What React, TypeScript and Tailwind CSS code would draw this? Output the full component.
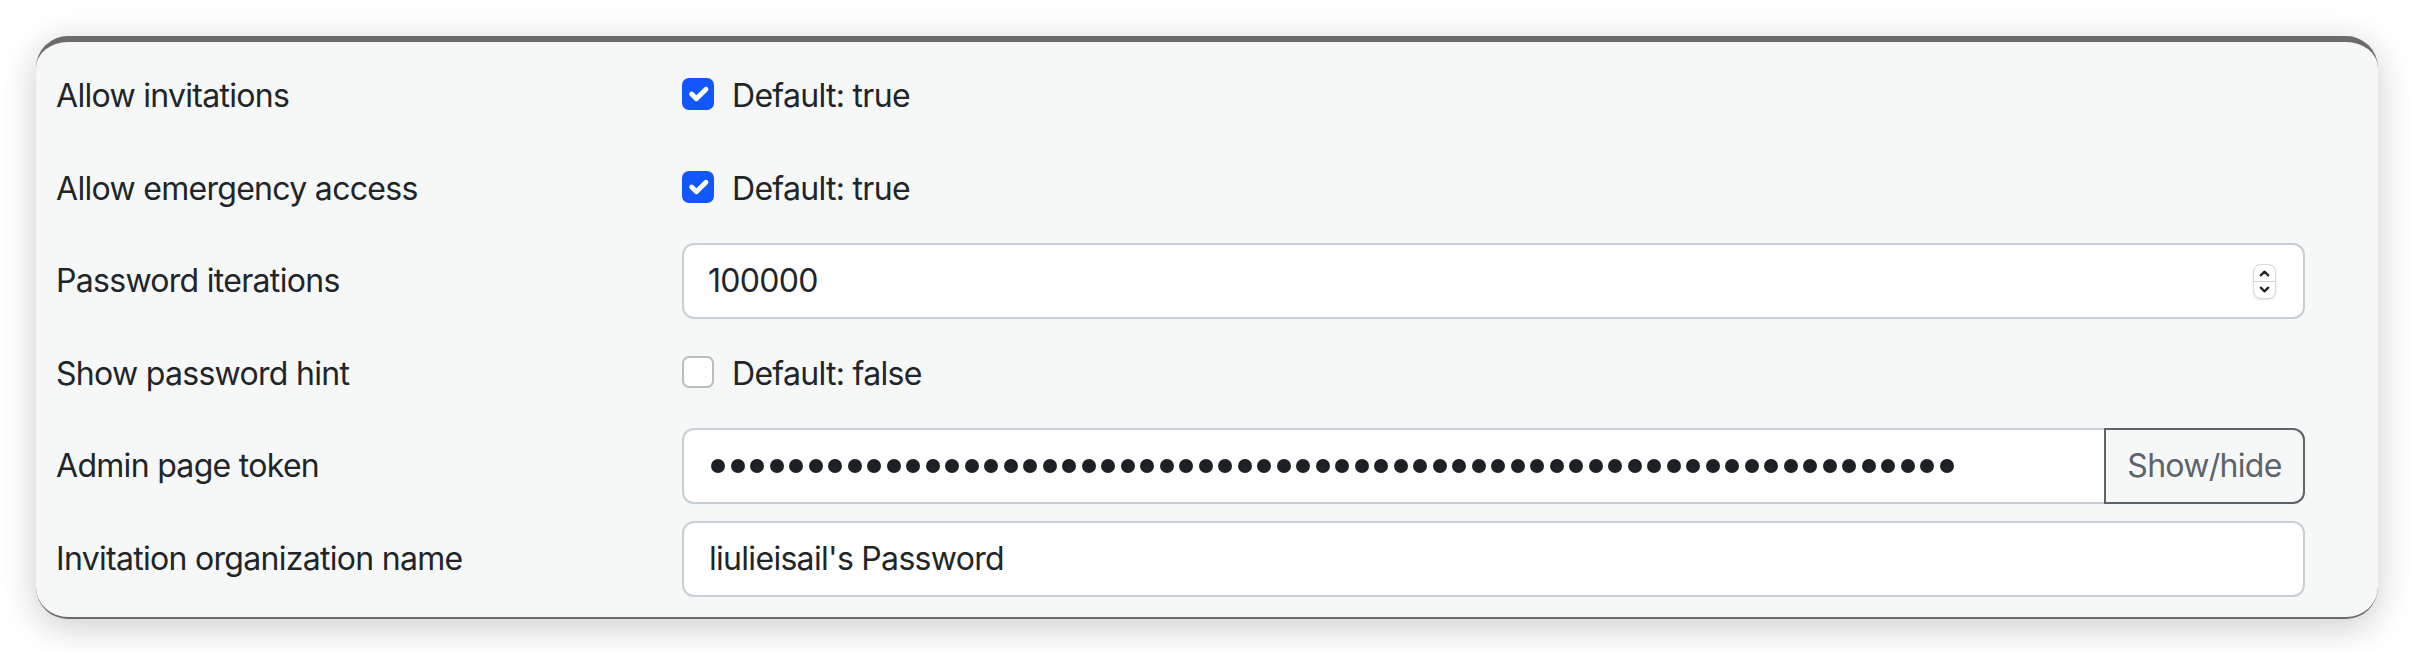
import React from 'react';
import { ChevronUp, ChevronDown } from 'lucide-react';

const Check: React.FC<{ on: boolean }> = ({ on }) => (
    <span
        className={
            on
                ? 'mt-[6px] flex h-[32px] w-[32px] shrink-0 items-center justify-center rounded-[7px] bg-[#1257fb]'
                : 'mt-[6px] flex h-[32px] w-[32px] shrink-0 items-center justify-center rounded-[7px] border-2 border-[#b9bdc1] bg-white'
        }
    >
        {on && (
            <svg viewBox="0 0 20 20" className="h-[32px] w-[32px]">
                <path d="m6 10 3 3 6-6" fill="none" stroke="#fff" strokeWidth="3" strokeLinecap="round" strokeLinejoin="round" />
            </svg>
        )}
    </span>
);

const Label: React.FC<{ children: React.ReactNode }> = ({ children }) => (
    <div className="w-[626px] shrink-0 pt-[14px] text-[32px] leading-[48px] text-[#212529]">{children}</div>
);

const CheckRow: React.FC<{ label: string; on: boolean }> = ({ label, on }) => (
    <div className="flex h-[76px]">
        <Label>{label}</Label>
        <div className="flex items-start gap-[18px] pt-[14px]">
            <Check on={on} />
            <span className="text-[32px] leading-[48px] text-[#212529]">Default: {on ? 'true' : 'false'}</span>
        </div>
    </div>
);

const App: React.FC = () => {
    const dots = Array.from({ length: 64 });

    return (
        <div className="min-h-[652px] bg-white px-[36px] pt-[36px] font-['Inter','Liberation_Sans',sans-serif] tracking-[-0.7px]">
            <div className="flex flex-col gap-[16.5px] rounded-[32px] border-t-[6px] border-b-[2px] border-[#6b6b6b] bg-[#f6f8f7] pt-[16px] pb-[20px] pl-[20px] shadow-[0_8px_36px_rgba(0,0,0,0.2)]">
                <CheckRow label="Allow invitations" on={true} />
                <CheckRow label="Allow emergency access" on={true} />

                {/* number input */}
                <div className="flex h-[76px]">
                    <Label>Password iterations</Label>
                    <div className="flex h-[76px] w-[1623px] items-center justify-between rounded-[12px] border-2 border-[#c9ced4] bg-white pl-[24px] pr-[27px]">
                        <span className="text-[32px] leading-[48px] text-[#212529]">100000</span>
                        <span className="flex h-[35px] w-[23px] flex-col items-center justify-between overflow-hidden rounded-[8px] border border-[#d9d9d9] bg-white shadow-[0_1px_2px_rgba(0,0,0,0.12)]">
                            <ChevronUp size={15} strokeWidth={3.5} className="mt-[1px] text-[#222]" />
                            <span className="h-px w-full bg-[#d4d4d4]" />
                            <ChevronDown size={15} strokeWidth={3.5} className="mb-[1px] text-[#222]" />
                        </span>
                    </div>
                </div>

                <CheckRow label="Show password hint" on={false} />

                {/* token with show/hide */}
                <div className="flex h-[76px]">
                    <Label>Admin page token</Label>
                    <div className="flex h-[76px] w-[1623px]">
                        <div className="flex flex-1 items-center gap-[5.5px] rounded-l-[12px] border-2 border-r-0 border-[#c9ced4] bg-white pl-[27px]">
                            {dots.map((_, i) => (
                                <span key={i} className="h-[14px] w-[14px] shrink-0 rounded-full bg-[#1d2125]" />
                            ))}
                        </div>
                        <button className="w-[201px] rounded-r-[12px] border-2 border-[#5c636a] bg-[#f6f8f7] text-[32px] leading-[48px] text-[#5c636a]">
                            Show/hide
                        </button>
                    </div>
                </div>

                <div className="flex h-[76px]">
                    <Label>Invitation organization name</Label>
                    <div className="flex h-[76px] w-[1623px] items-center rounded-[12px] border-2 border-[#c9ced4] bg-white pl-[25px]">
                        <span className="text-[32px] leading-[48px] text-[#212529]">liulieisail's Password</span>
                    </div>
                </div>
            </div>
        </div>
    );
};

export default App;
